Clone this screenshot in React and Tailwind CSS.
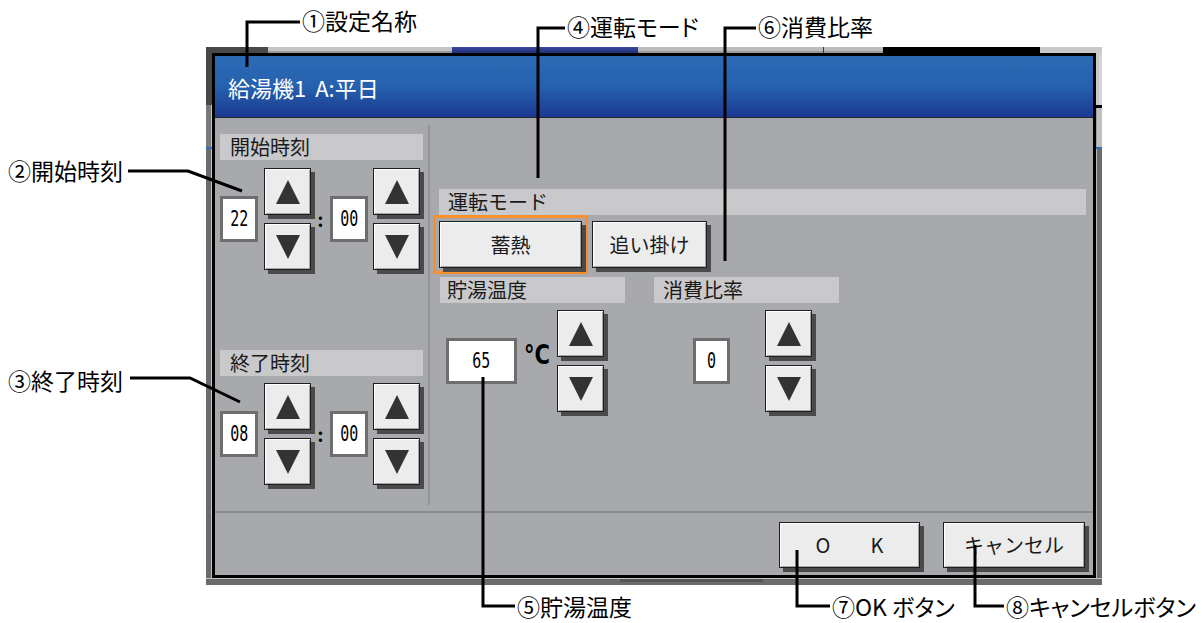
const ui = "font-['Noto_Sans_CJK_JP',sans-serif]";
const digits = "font-['DejaVu_Sans_Mono',monospace]";

function Tri({ up }) {
  return (
    <svg width="24" height="24" viewBox="0 0 24 24">
      <polygon points={up ? "12,0 24,24 0,24" : "0,0 24,0 12,24"} fill="#333333" />
    </svg>
  );
}

function Btn({ className = "", children }) {
  return (
    <div
      className={
        "flex items-center justify-center border border-[#1e1e1e] bg-[#ececec] shadow-[inset_1px_1px_0_#ffffff,inset_-1px_-1px_0_#a6a6a6,4px_4px_0_#4a4a4a] " +
        className
      }
    >
      {children}
    </div>
  );
}

function Spin() {
  return (
    <div className="flex flex-col gap-[8px]">
      <Btn className="w-[47px] h-[47px]">
        <Tri up />
      </Btn>
      <Btn className="w-[47px] h-[47px]">
        <Tri />
      </Btn>
    </div>
  );
}

function Val({ w, children }) {
  return (
    <div className={"h-[46px] border-[3px] border-[#6e6e6e] bg-white flex items-center justify-center " + w}>
      <span className={digits + " text-[22px] leading-none text-black scale-x-[0.68] inline-block"}>{children}</span>
    </div>
  );
}

function Head({ className = "", children }) {
  return (
    <div className={"h-[26px] bg-[#c9c9cb] text-[20px] leading-[26px] text-[#1a1a1a] " + className}>
      {children}
    </div>
  );
}

function TimeRow({ h, m }) {
  return (
    <div className="flex items-center">
      <Val w="w-[38px]">{h}</Val>
      <div className="ml-[6px]">
        <Spin />
      </div>
      <div className="w-[19px] text-center text-[18px] font-bold leading-none text-black">:</div>
      <Val w="w-[38px]">{m}</Val>
      <div className="ml-[5px]">
        <Spin />
      </div>
    </div>
  );
}

function Dialog() {
  return (
    <div className={"w-[884px] h-[525px] border-[3px] border-black flex flex-col " + ui}>
      <div className="h-[62px] border-b border-[#26262e] bg-linear-to-b from-[#2b6bb4] via-[#2661ae] to-[#1c3990] flex items-center pl-[13px]">
        <span className="text-white text-[22px] leading-none">給湯機1</span>
        <span className="ml-[9px] text-white text-[22px] leading-none">A:平日</span>
      </div>
      <div className="flex-1 flex flex-col bg-[#a8a9ad]">
        <div className="h-[393px] flex">
          <div className="w-[213px] pt-[16px] pl-[5px]">
            <Head className="w-[203px] pl-[10px]">開始時刻</Head>
            <div className="mt-[8px]">
              <TimeRow h="22" m="00" />
            </div>
            <Head className="w-[203px] pl-[10px] mt-[80px]">終了時刻</Head>
            <div className="mt-[7px]">
              <TimeRow h="08" m="00" />
            </div>
          </div>
          <div className="w-[2px] mt-[7px] mb-[6px] bg-[#939498]" />
          <div className="flex-1 pt-[71px] pl-[9px] pr-[7px]">
            <Head className="h-[25px] leading-[25px] pl-[9px]">運転モード</Head>
            <div className="flex items-center ml-[-6px]">
              <div className="border-[3px] border-[#f7902c] p-[3px]">
                <Btn className="w-[143px] h-[47px] text-[20px] text-[#1a1a1a]">蓄熱</Btn>
              </div>
              <Btn className="ml-[4px] w-[115px] h-[47px] text-[20px] text-[#1a1a1a]">追い掛け</Btn>
            </div>
            <div className="flex gap-[29px] mt-[3px] ml-[1px]">
              <Head className="w-[185px] pl-[7px]">貯湯温度</Head>
              <Head className="w-[185px] pl-[9px]">消費比率</Head>
            </div>
            <div className="flex items-center mt-[7px] ml-[7px]">
              <Val w="w-[71px]">65</Val>
              <span className="ml-[7px] mb-[14px] w-[26px] font-['DejaVu_Sans',sans-serif] font-bold text-[27px] leading-none text-black scale-x-[0.78] origin-left inline-block whitespace-nowrap">°C</span>
              <div className="ml-[7px]">
                <Spin />
              </div>
              <div className="ml-[89px]">
                <Val w="w-[37px]">0</Val>
              </div>
              <div className="ml-[35px]">
                <Spin />
              </div>
            </div>
          </div>
        </div>
        <div className="h-[2px] bg-[#8c8d91]" />
        <div className="flex-1 flex justify-end items-start pt-[9px] pr-[8px] gap-[23px]">
          <Btn className="w-[141px] h-[46px] gap-[40px] text-[20px] text-[#1a1a1a]">
            <span>O</span>
            <span>K</span>
          </Btn>
          <Btn className="w-[142px] h-[46px] text-[20px] text-[#1a1a1a]">キャンセル</Btn>
        </div>
      </div>
    </div>
  );
}

function Frame() {
  return (
    <div className="w-[896px] h-[538px] flex flex-col bg-[#6b6b6b]">
      <div className="h-[6px] flex">
        <div className="w-[62px] bg-[#484848]" />
        <div className="w-[184px] bg-[#c4c4c4] border-b-2 border-[#9a9a9a]" />
        <div className="w-[186px] bg-linear-to-b from-[#3a4aa0] to-[#222f7a]" />
        <div className="w-[185px] bg-[#bcbcbc] border-b-2 border-[#9a9a9a]" />
        <div className="w-[1px] bg-[#3a3a3a]" />
        <div className="w-[59px] bg-[#bcbcbc] border-b-2 border-[#9a9a9a]" />
        <div className="w-[157px] bg-black" />
        <div className="flex-1 bg-[#c8c8c8]" />
      </div>
      <div className="flex h-[525px]">
        <div className="w-[6px] flex flex-col">
          <div className="h-[52px] bg-[#484848]" />
          <div className="h-[42px] bg-[#7a7a7a] border-r border-[#c4c4c4]" />
          <div className="h-[2px] bg-[#2f6fc0]" />
          <div className="flex-1 bg-[#6b6b6b] border-r border-[#c4c4c4]" />
        </div>
        <Dialog />
        <div className="w-[6px] flex flex-col">
          <div className="h-[52px] border-l-[3px] border-[#c8c8c8] bg-[#d4d4d4]" />
          <div className="h-[3px] bg-black" />
          <div className="h-[39px] bg-[#c0c0c0] border-l border-[#a0a0a0]" />
          <div className="h-[2px] bg-[#2f6fc0]" />
          <div className="flex-1 bg-[#6b6b6b] border-l border-[#b8b8b8]" />
        </div>
      </div>
      <div className="h-[7px] border-t border-[#c4c4c4] flex">
        <div className="w-[414px]" />
        <div className="w-[143px] h-[3px] bg-[#555555]" />
      </div>
    </div>
  );
}

const lines = [
  "M247 67 V22 H300",
  "M128 171 H188 L242 191",
  "M130 378 H190 L240 402",
  "M538 178 V28 H565",
  "M725 261 V28 H756",
  "M483 377 V606 H515",
  "M797 550 V606 H830",
  "M975 545 V606 H1004",
];

const labels = [
  { t: "①設定名称", x: 302, y: 20 },
  { t: "②開始時刻", x: 8, y: 170 },
  { t: "③終了時刻", x: 8, y: 380 },
  { t: "④運転モード", x: 567, y: 26 },
  { t: "⑥消費比率", x: 758, y: 26 },
  { t: "⑤貯湯温度", x: 517, y: 606 },
  { t: "⑦OK ボタン", x: 832, y: 606 },
  { t: "⑧キャンセルボタン", x: 1006, y: 606 },
];

export default function App() {
  return (
    <div className="relative w-[1202px] h-[623px] bg-white overflow-hidden">
      <div className="pt-[47px] pl-[206px]">
        <Frame />
      </div>
      <svg className="absolute inset-0 pointer-events-none" width="1202" height="623">
        {lines.map((d) => (
          <path key={d} d={d} fill="none" stroke="#000" strokeWidth="3" />
        ))}
      </svg>
      {labels.map((l) => (
        <span
          key={l.t}
          className={"absolute text-[23px] leading-none text-black whitespace-nowrap -translate-y-1/2 [font-feature-settings:'palt'] " + ui}
          style={{ left: l.x, top: l.y }}
        >
          {l.t}
        </span>
      ))}
    </div>
  );
}
